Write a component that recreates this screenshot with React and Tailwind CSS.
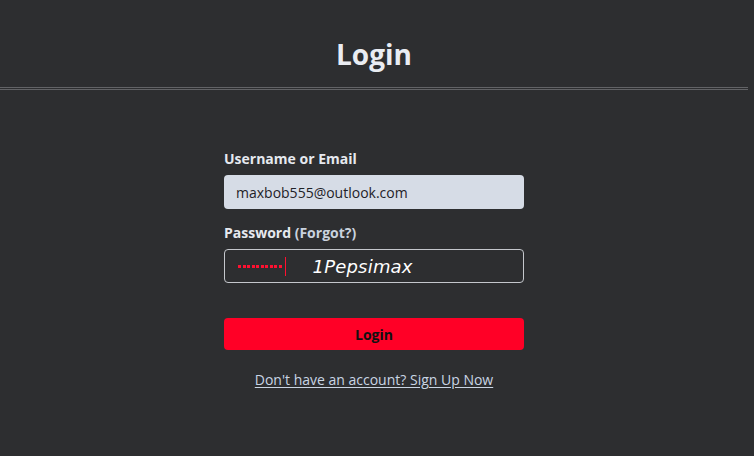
import React from 'react';

export default function App() {
  const dots = Array.from({ length: 10 });

  return (
    <div className="min-h-screen bg-[#2d2e30] font-['Open_Sans',sans-serif]">
      <div className="mr-[6px]">
        {/* Header */}
        <header className="h-[90px] pt-[35px] border-b-[3px] border-double border-[#626366]">
          <h1 className="text-center text-[28px] leading-[38px] font-bold text-[#e9ecf2]">Login</h1>
        </header>

        {/* Form */}
        <form className="w-[300px] mx-auto pt-[59px] flex flex-col" onSubmit={(e) => e.preventDefault()}>
          <label className="text-[14px] leading-[20px] font-bold text-[#e6e9ef]">Username or Email</label>
          <input
            type="text"
            defaultValue="maxbob555@outlook.com"
            className="mt-[6px] h-[34px] rounded-[4px] bg-[#d6dce6] px-3 text-[14px] text-[#1f2228] outline-none"
          />

          <label className="mt-[14px] text-[14px] leading-[20px] font-bold text-[#e6e9ef]">
            Password <span className="text-[#c9d2de]">(Forgot?)</span>
          </label>
          <div className="mt-[6px] h-[34px] rounded-[4px] border border-[#c4c7cc] flex items-center pl-[13px]">
            <div className="flex items-center gap-[1.5px] mt-[1px]">
              {dots.map((_, i) => (
                <span key={i} className="w-[3px] h-[3px] bg-[#ff1030]" />
              ))}
            </div>
            <span className="ml-[3px] w-px h-[19px] bg-[#ff1030]" />
            <span className="ml-[27px] text-[18px] italic text-white font-['DejaVu_Sans',sans-serif] tracking-[0.2px]">1Pepsimax</span>
          </div>

          <button
            type="submit"
            className="mt-[35px] h-[32px] rounded-[4px] bg-[#ff0026] text-[14px] font-bold text-[#111]"
          >
            Login
          </button>

          <a href="#" className="mt-[20px] self-center text-[14px] leading-[20px] text-[#c9d5e4] underline underline-offset-2">
            Don't have an account? Sign Up Now
          </a>
        </form>
      </div>
    </div>
  );
}
